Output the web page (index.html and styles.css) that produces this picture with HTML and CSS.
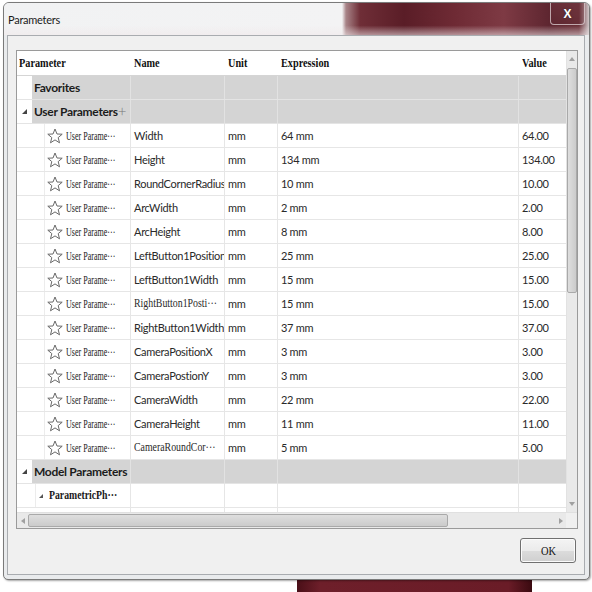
FILE: index.html
```html
<!DOCTYPE html>
<html>
<head>
<meta charset="utf-8">
<link rel="stylesheet" href="styles.css">
</head>
<body>
<div class="window">
  <div class="titlebar">
    <span class="title">Parameters</span>
    <div class="close">X</div>
  </div>
  <div class="client">
    <div class="grid">
      <div class="table-area">
        <div class="rows">
          <div class="row head">
            <div class="cell"><span class="hs">Parameter</span></div>
            <div class="cell"><span class="hs">Name</span></div>
            <div class="cell"><span class="hs">Unit</span></div>
            <div class="cell"><span class="hs">Expression</span></div>
            <div class="cell"><span class="hs">Value</span></div>
          </div>
          <div class="row group">
            <div class="cell first"><span class="tw"></span><span class="glabel">Favorites</span></div>
            <div class="cell"></div><div class="cell"></div><div class="cell"></div><div class="cell"></div>
          </div>
          <div class="row group">
            <div class="cell first"><span class="tw"><svg class="tri" viewBox="0 0 5 5"><polygon points="5,0 5,5 0,5"/></svg></span><span class="glabel">User Parameters</span><span class="plus">+</span></div>
            <div class="cell"></div><div class="cell"></div><div class="cell"></div><div class="cell"></div>
          </div>

          <div class="row data"><div class="cell first"><span class="indent"></span><svg class="star" viewBox="0 0 16 16"><polygon points="8,1 10,6 15.2,6.2 11.2,9.6 12.5,14.8 8,11.9 3.5,14.8 4.8,9.6 0.8,6.2 6,6"/></svg><span class="up">User Parame···</span></div><div class="cell">Width</div><div class="cell">mm</div><div class="cell">64 mm</div><div class="cell">64.00</div></div>
          <div class="row data"><div class="cell first"><span class="indent"></span><svg class="star" viewBox="0 0 16 16"><polygon points="8,1 10,6 15.2,6.2 11.2,9.6 12.5,14.8 8,11.9 3.5,14.8 4.8,9.6 0.8,6.2 6,6"/></svg><span class="up">User Parame···</span></div><div class="cell">Height</div><div class="cell">mm</div><div class="cell">134 mm</div><div class="cell">134.00</div></div>
          <div class="row data"><div class="cell first"><span class="indent"></span><svg class="star" viewBox="0 0 16 16"><polygon points="8,1 10,6 15.2,6.2 11.2,9.6 12.5,14.8 8,11.9 3.5,14.8 4.8,9.6 0.8,6.2 6,6"/></svg><span class="up">User Parame···</span></div><div class="cell">RoundCornerRadius</div><div class="cell">mm</div><div class="cell">10 mm</div><div class="cell">10.00</div></div>
          <div class="row data"><div class="cell first"><span class="indent"></span><svg class="star" viewBox="0 0 16 16"><polygon points="8,1 10,6 15.2,6.2 11.2,9.6 12.5,14.8 8,11.9 3.5,14.8 4.8,9.6 0.8,6.2 6,6"/></svg><span class="up">User Parame···</span></div><div class="cell">ArcWidth</div><div class="cell">mm</div><div class="cell">2 mm</div><div class="cell">2.00</div></div>
          <div class="row data"><div class="cell first"><span class="indent"></span><svg class="star" viewBox="0 0 16 16"><polygon points="8,1 10,6 15.2,6.2 11.2,9.6 12.5,14.8 8,11.9 3.5,14.8 4.8,9.6 0.8,6.2 6,6"/></svg><span class="up">User Parame···</span></div><div class="cell">ArcHeight</div><div class="cell">mm</div><div class="cell">8 mm</div><div class="cell">8.00</div></div>
          <div class="row data"><div class="cell first"><span class="indent"></span><svg class="star" viewBox="0 0 16 16"><polygon points="8,1 10,6 15.2,6.2 11.2,9.6 12.5,14.8 8,11.9 3.5,14.8 4.8,9.6 0.8,6.2 6,6"/></svg><span class="up">User Parame···</span></div><div class="cell">LeftButton1Position</div><div class="cell">mm</div><div class="cell">25 mm</div><div class="cell">25.00</div></div>
          <div class="row data"><div class="cell first"><span class="indent"></span><svg class="star" viewBox="0 0 16 16"><polygon points="8,1 10,6 15.2,6.2 11.2,9.6 12.5,14.8 8,11.9 3.5,14.8 4.8,9.6 0.8,6.2 6,6"/></svg><span class="up">User Parame···</span></div><div class="cell">LeftButton1Width</div><div class="cell">mm</div><div class="cell">15 mm</div><div class="cell">15.00</div></div>
          <div class="row data"><div class="cell first"><span class="indent"></span><svg class="star" viewBox="0 0 16 16"><polygon points="8,1 10,6 15.2,6.2 11.2,9.6 12.5,14.8 8,11.9 3.5,14.8 4.8,9.6 0.8,6.2 6,6"/></svg><span class="up">User Parame···</span></div><div class="cell"><span class="sn">RightButton1Posti···</span></div><div class="cell">mm</div><div class="cell">15 mm</div><div class="cell">15.00</div></div>
          <div class="row data"><div class="cell first"><span class="indent"></span><svg class="star" viewBox="0 0 16 16"><polygon points="8,1 10,6 15.2,6.2 11.2,9.6 12.5,14.8 8,11.9 3.5,14.8 4.8,9.6 0.8,6.2 6,6"/></svg><span class="up">User Parame···</span></div><div class="cell">RightButton1Width</div><div class="cell">mm</div><div class="cell">37 mm</div><div class="cell">37.00</div></div>
          <div class="row data"><div class="cell first"><span class="indent"></span><svg class="star" viewBox="0 0 16 16"><polygon points="8,1 10,6 15.2,6.2 11.2,9.6 12.5,14.8 8,11.9 3.5,14.8 4.8,9.6 0.8,6.2 6,6"/></svg><span class="up">User Parame···</span></div><div class="cell">CameraPositionX</div><div class="cell">mm</div><div class="cell">3 mm</div><div class="cell">3.00</div></div>
          <div class="row data"><div class="cell first"><span class="indent"></span><svg class="star" viewBox="0 0 16 16"><polygon points="8,1 10,6 15.2,6.2 11.2,9.6 12.5,14.8 8,11.9 3.5,14.8 4.8,9.6 0.8,6.2 6,6"/></svg><span class="up">User Parame···</span></div><div class="cell">CameraPostionY</div><div class="cell">mm</div><div class="cell">3 mm</div><div class="cell">3.00</div></div>
          <div class="row data"><div class="cell first"><span class="indent"></span><svg class="star" viewBox="0 0 16 16"><polygon points="8,1 10,6 15.2,6.2 11.2,9.6 12.5,14.8 8,11.9 3.5,14.8 4.8,9.6 0.8,6.2 6,6"/></svg><span class="up">User Parame···</span></div><div class="cell">CameraWidth</div><div class="cell">mm</div><div class="cell">22 mm</div><div class="cell">22.00</div></div>
          <div class="row data"><div class="cell first"><span class="indent"></span><svg class="star" viewBox="0 0 16 16"><polygon points="8,1 10,6 15.2,6.2 11.2,9.6 12.5,14.8 8,11.9 3.5,14.8 4.8,9.6 0.8,6.2 6,6"/></svg><span class="up">User Parame···</span></div><div class="cell">CameraHeight</div><div class="cell">mm</div><div class="cell">11 mm</div><div class="cell">11.00</div></div>
          <div class="row data"><div class="cell first"><span class="indent"></span><svg class="star" viewBox="0 0 16 16"><polygon points="8,1 10,6 15.2,6.2 11.2,9.6 12.5,14.8 8,11.9 3.5,14.8 4.8,9.6 0.8,6.2 6,6"/></svg><span class="up">User Parame···</span></div><div class="cell"><span class="sn">CameraRoundCor···</span></div><div class="cell">mm</div><div class="cell">5 mm</div><div class="cell">5.00</div></div>

          <div class="row group">
            <div class="cell first"><span class="tw"><svg class="tri" viewBox="0 0 5 5"><polygon points="5,0 5,5 0,5"/></svg></span><span class="glabel">Model Parameters</span></div>
            <div class="cell"></div><div class="cell"></div><div class="cell"></div><div class="cell"></div>
          </div>
          <div class="row data">
            <div class="cell first sub"><span class="subtw"><svg class="tri" viewBox="0 0 5 5"><polygon points="5,0 5,5 0,5"/></svg></span><span class="subl">ParametricPh···</span></div>
            <div class="cell"></div><div class="cell"></div><div class="cell"></div><div class="cell"></div>
          </div>
          <div class="row filler">
            <div class="cell"></div><div class="cell"></div><div class="cell"></div><div class="cell"></div><div class="cell"></div>
          </div>
        </div>
        <div class="vscroll">
          <div class="arrow"><span class="ar up-ar"></span></div>
          <div class="thumb v"></div>
          <div class="space"></div>
          <div class="arrow"><span class="ar down-ar"></span></div>
        </div>
      </div>
      <div class="hscroll">
        <div class="harrow"><span class="ar left-ar"></span></div>
        <div class="thumb h"></div>
        <div class="space"></div>
        <div class="harrow"><span class="ar right-ar"></span></div>
        <div class="corner"></div>
      </div>
    </div>
    <div class="footer">
      <button class="ok"><span class="okt">OK</span></button>
    </div>
  </div>
</div>
</body>
</html>
```
FILE: styles.css
```css
html, body {
  margin: 0;
  padding: 0;
}
body {
  width: 592px;
  height: 592px;
  overflow: hidden;
  background:
    linear-gradient(to right, #4a0f18, #6e1f2a 10%, #6a1c27 90%, #3a0a10) 297px 579px / 235px 13px no-repeat,
    #ffffff;
  font-family: Lato, "Noto Sans", sans-serif;
  color: #222;
}
.window {
  box-sizing: border-box;
  margin: 2px 0 0 3px;
  width: 587px;
  height: 578px;
  border: 1px solid #7a7a7a;
  border-radius: 6px 6px 5px 5px;
  background: #e9ebed;
  padding: 0 4px 4px 3px;
  box-shadow: 1px 1px 2px rgba(0,0,0,0.35);
}
.titlebar {
  height: 32px;
  margin: 0 -4px 0 -3px;
  padding: 0 4px 0 4px;
  display: flex;
  align-items: flex-start;
  justify-content: space-between;
  border-radius: 5px 5px 0 0;
  background:
    linear-gradient(to bottom, rgba(255,255,255,0) 70%, rgba(240,232,234,0.55) 100%),
    linear-gradient(to right, #f1f2f3 0, #f3f3f4 338px, #a88488 342px, #6f2e37 356px, #5a1d27 400px, #6e2a34 450px, #7e3a44 500px, #5e2630 545px, #6a3038 575px, #cfc6c8 585px);
}
.title {
  font-size: 11px;
  margin-top: 10px;
  margin-left: 0;
  color: #1a1a1a;
  letter-spacing: -0.25px;
}
.close {
  width: 35px;
  height: 22px;
  box-sizing: border-box;
  border: 1px solid rgba(230,220,222,0.7);
  border-top: none;
  border-radius: 0 0 4px 4px;
  background: linear-gradient(to bottom, rgba(120,60,70,0.35), rgba(90,40,50,0.2));
  color: #fff;
  font-family: "Liberation Sans", Arial, sans-serif;
  font-weight: bold;
  font-size: 12px;
  display: flex;
  align-items: center;
  justify-content: center;
  text-shadow: 0 0 2px #333;
}
.client {
  box-sizing: border-box;
  height: 540px;
  border: 1px solid #a9acb0;
  background: #f0f0f0;
  padding: 14px 6px 11px 8px;
}
.grid {
  box-sizing: border-box;
  height: 479px;
  width: 562px;
  border: 1px solid #9a9a9a;
  background: #fff;
}
.table-area {
  display: flex;
  height: 461px;
}
.rows {
  width: 549px;
  display: flex;
  flex-direction: column;
}
.row {
  display: grid;
  grid-template-columns: 114px 94px 53px 241px 47px;
  height: 24px;
  box-sizing: border-box;
  border-bottom: 1px solid #e6e6e6;
}
.cell {
  box-sizing: border-box;
  border-right: 1px solid #e6e6e6;
  padding-left: 3px;
  display: flex;
  align-items: center;
  font-size: 11px;
  white-space: nowrap;
  overflow: hidden;
  letter-spacing: -0.3px;
  color: #2a2a2a;
}
.row .cell:first-child {
  padding-left: 0;
}
.row .cell:last-child {
  border-right: none;
}
.row.head {
  height: 25px;
  border-bottom: 1px solid #d5d5d5;
}
.row.head .cell {
  border-right: none;
  padding-left: 3px;
  overflow: visible;
}
.row.head .cell:first-child {
  padding-left: 2px;
}
.hs {
  display: inline-block;
  font-family: "Liberation Serif", "Times New Roman", serif;
  font-weight: bold;
  font-size: 13.5px;
  letter-spacing: 0;
  color: #111;
  transform: scaleX(0.76);
  transform-origin: left center;
}
.row.group {
  background: linear-gradient(to right, #fff 15px, #d4d4d4 15px);
  border-bottom: 1px solid #e4e4e4;
}
.row.group .cell {
  border-right-color: #e2e2e2;
}
.row.group .cell.first {
  overflow: visible;
}
.tw {
  width: 15px;
  flex: none;
  display: flex;
  align-items: center;
  justify-content: center;
}
.tri {
  width: 5px;
  height: 5px;
  fill: #444;
}
.glabel {
  font-family: Lato, "Noto Sans", sans-serif;
  font-weight: bold;
  font-size: 12px;
  letter-spacing: -0.3px;
  color: #1c1c1c;
  padding-left: 2px;
}
.plus {
  font-size: 15px;
  font-weight: 300;
  color: #777;
  line-height: 1;
}
.indent {
  width: 28px;
  height: 100%;
  flex: none;
  box-sizing: border-box;
  border-right: 1px solid #ececec;
}
.star {
  width: 16px;
  height: 16px;
  flex: none;
  margin-left: 2px;
  fill: none;
  stroke: #6a6a6a;
  stroke-width: 1;
  stroke-linejoin: round;
}
.up {
  display: inline-block;
  font-family: "Liberation Serif", "Times New Roman", serif;
  font-size: 11.5px;
  letter-spacing: 0;
  margin-left: 3px;
  color: #222;
  transform: scaleX(0.7);
  transform-origin: left center;
}
.sn {
  display: inline-block;
  font-family: "Liberation Serif", "Times New Roman", serif;
  font-size: 12px;
  letter-spacing: 0;
  transform: scaleX(0.82);
  transform-origin: left center;
}
.cell.sub {
  padding-left: 0;
}
.subtw {
  width: 10px;
  margin-left: 18px;
  height: 100%;
  box-sizing: border-box;
  border-left: 1px solid #ececec;
  display: flex;
  align-items: center;
  justify-content: center;
  flex: none;
}
.subtw .tri {
  fill: #555;
  width: 4px;
  height: 4px;
}
.subl {
  display: inline-block;
  font-family: "Liberation Serif", "Times New Roman", serif;
  font-weight: bold;
  font-size: 12.5px;
  letter-spacing: 0;
  margin-left: 4px;
  color: #1a1a1a;
  transform: scaleX(0.78);
  transform-origin: left center;
}
.row.filler {
  height: 4px;
  border-bottom: none;
}
.vscroll {
  width: 11px;
  display: flex;
  flex-direction: column;
  background: #e9e9e9;
  border-left: 1px solid #e2e2e2;
  box-sizing: border-box;
}
.arrow {
  height: 16px;
  display: flex;
  align-items: center;
  justify-content: center;
  flex: none;
}
.thumb.v {
  height: 225px;
  margin: 1px 0 0 0;
  box-sizing: border-box;
  border: 1px solid #a9a9a9;
  border-radius: 2px;
  background: linear-gradient(to right, #dedede, #cbcbcb);
  flex: none;
}
.space {
  flex: 1;
}
.ar {
  width: 0;
  height: 0;
  border: 3px solid transparent;
}
.up-ar { border-bottom: 4px solid #a0a0a0; border-top: none; }
.down-ar { border-top: 4px solid #a0a0a0; border-bottom: none; }
.left-ar { border-right: 4px solid #a0a0a0; border-left: none; }
.right-ar { border-left: 4px solid #a0a0a0; border-right: none; }
.hscroll {
  height: 16px;
  display: flex;
  background: #e9e9e9;
  border-top: 1px solid #e0e0e0;
  box-sizing: border-box;
}
.harrow {
  width: 11px;
  display: flex;
  align-items: center;
  justify-content: center;
  flex: none;
}
.thumb.h {
  width: 420px;
  flex: none;
  box-sizing: border-box;
  margin: 1px 0;
  border: 1px solid #a9a9a9;
  border-radius: 2px;
  background: linear-gradient(to bottom, #dedede, #cbcbcb);
}
.corner {
  width: 11px;
  background: #f0f0f0;
  flex: none;
}
.footer {
  display: flex;
  justify-content: flex-end;
  margin-top: 9px;
  padding-right: 2px;
}
.ok {
  width: 56px;
  height: 25px;
  box-sizing: border-box;
  border: 1px solid #707070;
  border-radius: 3px;
  background: linear-gradient(to bottom, #f4f4f4 0%, #ebebeb 50%, #dcdcdc 51%, #cfcfcf 100%);
  color: #111;
  padding: 0;
  box-shadow: inset 0 0 0 1px #fbfbfb;
  display: flex;
  align-items: center;
  justify-content: center;
}
.okt {
  display: inline-block;
  font-family: "Liberation Serif", "Times New Roman", serif;
  font-size: 13px;
  transform: scaleX(0.8);
}
```
